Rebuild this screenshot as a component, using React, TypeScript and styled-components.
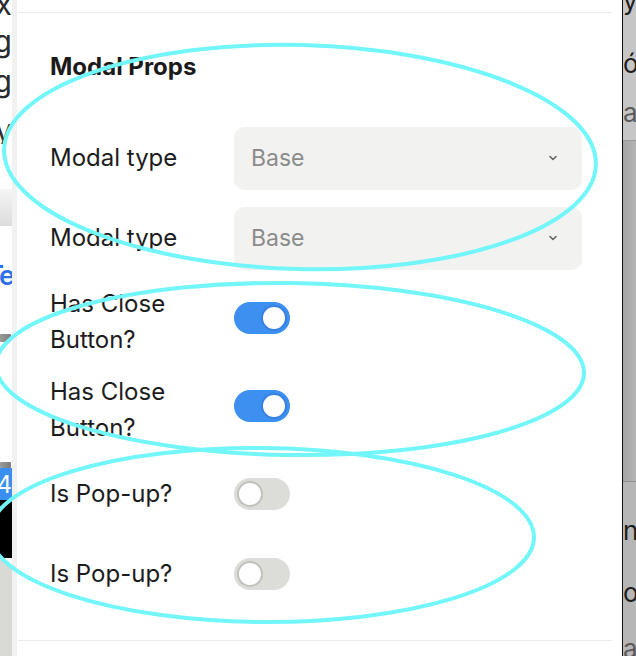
import styled, { createGlobalStyle } from "styled-components";

const GlobalStyle = createGlobalStyle`
  html, body {
    margin: 0;
    padding: 0;
    background: #ffffff;
  }
  body {
    font-family: Inter, "Noto Sans", "Liberation Sans", sans-serif;
    color: #1c1c1c;
  }
`;

type Row =
  | { kind: "select"; label: string; value: string }
  | { kind: "toggle"; label: string; on: boolean };

const rows: Row[] = [
  { kind: "select", label: "Modal type", value: "Base" },
  { kind: "select", label: "Modal type", value: "Base" },
  { kind: "toggle", label: "Has Close Button?", on: true },
  { kind: "toggle", label: "Has Close Button?", on: true },
  { kind: "toggle", label: "Is Pop-up?", on: false },
  { kind: "toggle", label: "Is Pop-up?", on: false },
];

// word endings of the page behind the drawer, only their last letters show
const leftTails = [
  { text: "box", top: -16, h: 40 },
  { text: "bug", top: -3, h: 40 },
  { text: "tag", top: 0, h: 40 },
  { text: "ty", top: 9, h: 34 },
];

const rightTop = [
  { text: "y", top: -17, muted: false },
  { text: "ó", top: 27, muted: false },
  { text: "a", top: 13, muted: true },
];

const rightBottom = [
  { text: "ns", top: 31, muted: false },
  { text: "o", top: 26, muted: false },
  { text: "a", top: 20, muted: true },
];

const ChevronDown = () => (
  <svg width="12" height="12" viewBox="0 0 12 12" fill="none">
    <path d="M3 4.5 L6 7.5 L9 4.5" stroke="#666666" strokeWidth="1.6" strokeLinecap="round" strokeLinejoin="round" />
  </svg>
);

export default function App() {
  return (
    <>
      <GlobalStyle />
      <Page>
        <LeftBackdrop>
          {leftTails.map((t, i) => (
            <Tail key={i} $top={t.top} $h={t.h}>
              {t.text}
            </Tail>
          ))}
          <Spacer $h={45} />
          <GrayCard />
          <Spacer $h={32} />
          <BlueTail>Te</BlueTail>
          <Spacer $h={40} />
          <Notch $h={8} />
          <Spacer $h={120} />
          <Notch $h={6} />
          <BlueBar>64</BlueBar>
          <BlackBlock />
          <Knob />
        </LeftBackdrop>
        <Gutter />
        <Panel>
          <PanelTop />
          <PanelBody>
            <Heading>Modal Props</Heading>
            <Form>
              {rows.map((row, i) => (
                <FieldRow key={i}>
                  <Label>{row.label}</Label>
                  {row.kind === "select" ? (
                    <Select>
                      <span>{row.value}</span>
                      <ChevronDown />
                    </Select>
                  ) : (
                    <Switch $on={row.on}>
                      <SwitchKnob $on={row.on} />
                    </Switch>
                  )}
                </FieldRow>
              ))}
            </Form>
          </PanelBody>
          <PanelFoot />
        </Panel>
        <Divider />
        <RightBackdrop>
          <RightTop>
            {rightTop.map((t, i) => (
              <RightText key={i} $top={t.top} $muted={t.muted}>
                {t.text}
              </RightText>
            ))}
          </RightTop>
          <RightMid />
          <RightBottom>
            {rightBottom.map((t, i) => (
              <RightText key={i} $top={t.top} $muted={t.muted}>
                {t.text}
              </RightText>
            ))}
          </RightBottom>
        </RightBackdrop>
        <Scribbles width="636" height="656" viewBox="0 0 636 656">
          <ellipse cx="300" cy="157" rx="296" ry="112" transform="rotate(1.5 300 157)" />
          <ellipse cx="290" cy="369" rx="294" ry="86" transform="rotate(0.8 290 369)" />
          <ellipse cx="262" cy="535" rx="272" ry="87" transform="rotate(0.5 262 535)" />
        </Scribbles>
      </Page>
    </>
  );
}

const Page = styled.div`
  position: relative;
  display: flex;
  width: 636px;
  height: 656px;
  overflow: hidden;
`;

const LeftBackdrop = styled.div`
  width: 12px;
  flex: none;
  display: flex;
  flex-direction: column;
  overflow: hidden;
  background: #ffffff;
`;

const Tail = styled.div<{ $top: number; $h: number }>`
  flex: none;
  display: flex;
  justify-content: flex-end;
  white-space: nowrap;
  font-size: 30px;
  line-height: 40px;
  height: ${(p) => p.$h}px;
  margin-top: ${(p) => p.$top}px;
  overflow: hidden;
  color: #2a2a2a;
`;

const Spacer = styled.div<{ $h: number }>`
  height: ${(p) => p.$h}px;
  flex: none;
`;

const GrayCard = styled.div`
  height: 37px;
  flex: none;
  background: linear-gradient(#f5f5f5, #dcdcdc);
`;

const BlueTail = styled.div`
  flex: none;
  display: flex;
  justify-content: flex-end;
  white-space: nowrap;
  font-size: 27px;
  font-weight: 600;
  letter-spacing: -3px;
  line-height: 36px;
  color: #2d6fe8;
`;

const Notch = styled.div<{ $h: number }>`
  height: ${(p) => p.$h}px;
  flex: none;
  margin-right: 1px;
  background: linear-gradient(90deg, #9a9a9a, #7c7c7c);
  border-radius: 1px;
`;

const BlueBar = styled.div`
  height: 32px;
  flex: none;
  display: flex;
  justify-content: flex-end;
  align-items: center;
  white-space: nowrap;
  background: #3b8ff2;
  color: #ffffff;
  font-size: 24px;
`;

const BlackBlock = styled.div`
  height: 58px;
  flex: none;
  background: #000000;
`;

const Knob = styled.div`
  flex: 1;
  background: #d9d9d5;
  border-radius: 0 9px 0 0;
  margin-top: 2px;
`;

const Gutter = styled.div`
  width: 5px;
  flex: none;
  background: #f1f1f1;
`;

const Panel = styled.div`
  width: 605px;
  flex: none;
  display: flex;
  flex-direction: column;
  background: #ffffff;
`;

const PanelTop = styled.div`
  height: 12px;
  flex: none;
  margin: 0 10px 0 1px;
  border-bottom: 1px solid #ebebeb;
`;

const PanelBody = styled.div`
  flex: 1;
  padding: 40px 0 0 33px;
`;

const Heading = styled.h2`
  margin: 0;
  font-size: 24px;
  line-height: 28px;
  font-weight: 700;
  color: #1a1a1a;
`;

const Form = styled.div`
  display: flex;
  flex-direction: column;
  gap: 16px;
  margin-top: 45px;
`;

const FieldRow = styled.div`
  display: grid;
  grid-template-columns: 160px 348px;
  column-gap: 24px;
  align-items: center;
  min-height: 64px;
`;

const Label = styled.div`
  font-size: 24px;
  line-height: 36px;
  color: #1c1c1c;
`;

const Select = styled.div`
  height: 63px;
  box-sizing: border-box;
  display: flex;
  align-items: center;
  justify-content: space-between;
  padding: 0 23px 0 17px;
  border-radius: 10px;
  background: #f2f2f0;
  font-size: 23px;
  color: #8b8b8b;
`;

const Switch = styled.div<{ $on: boolean }>`
  align-self: start;
  margin-top: 16px;
  width: 56px;
  height: 32px;
  box-sizing: border-box;
  border-radius: 16px;
  padding: 3px;
  display: flex;
  justify-content: ${(p) => (p.$on ? "flex-end" : "flex-start")};
  background: ${(p) => (p.$on ? "#3d8ff0" : "#dcdcd8")};
`;

const SwitchKnob = styled.div<{ $on: boolean }>`
  width: 26px;
  height: 26px;
  box-sizing: border-box;
  border-radius: 50%;
  background: #ffffff;
  border: 2px solid ${(p) => (p.$on ? "#3583e0" : "#c2c2bd")};
`;

const PanelFoot = styled.div`
  height: 15px;
  flex: none;
  margin: 0 10px 0 1px;
  border-top: 1px solid #ebebeb;
`;

const Divider = styled.div`
  width: 1px;
  flex: none;
  background: #111111;
`;

const RightBackdrop = styled.div`
  width: 13px;
  flex: none;
  display: flex;
  flex-direction: column;
  overflow: hidden;
  background: #adadad;
`;

const RightTop = styled.div`
  height: 140px;
  flex: none;
  overflow: hidden;
  background: #c6c6c6;
  border-bottom: 1px solid #9a9a9a;
  display: flex;
  flex-direction: column;
`;

const RightText = styled.div<{ $top: number; $muted?: boolean }>`
  flex: none;
  margin-top: ${(p) => p.$top}px;
  font-size: 26px;
  line-height: 36px;
  white-space: nowrap;
  color: ${(p) => (p.$muted ? "#5a5a5a" : "#1e1e1e")};
`;

const RightMid = styled.div`
  height: 340px;
  flex: none;
  background: linear-gradient(90deg, #a6a6a6, #b4b4b4);
  border-bottom: 1px solid #8f8f8f;
`;

const RightBottom = styled.div`
  flex: 1;
  background: #b6b6b6;
  display: flex;
  flex-direction: column;
`;

const Scribbles = styled.svg`
  position: absolute;
  inset: 0;
  pointer-events: none;
  fill: none;
  stroke: #72f6fa;
  stroke-width: 4;
`;
